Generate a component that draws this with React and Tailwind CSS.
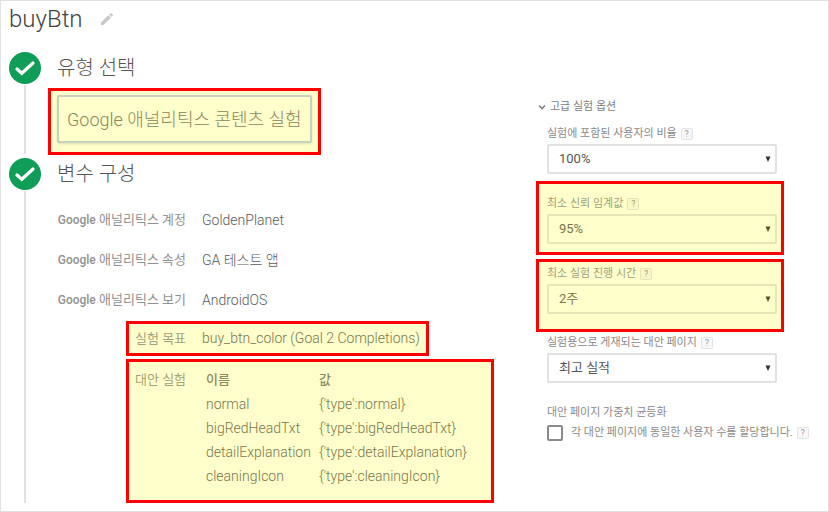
const variations = [
  { name: "normal", value: "{'type':normal}" },
  { name: "bigRedHeadTxt", value: "{'type':bigRedHeadTxt}" },
  { name: "detailExplanation", value: "{'type':detailExplanation}" },
  { name: "cleaningIcon", value: "{'type':cleaningIcon}" },
];

const account = [
  { label: "애널리틱스 계정", value: "GoldenPlanet" },
  { label: "애널리틱스 속성", value: "GA 테스트 앱" },
  { label: "애널리틱스 보기", value: "AndroidOS" },
];

function Step({ title, className, children }) {
  return (
    <li className="group flex gap-4">
      <div className="flex w-8 shrink-0 flex-col items-center">
        <svg viewBox="0 0 32 32" className="h-8 w-8">
          <circle cx="16" cy="16" r="16" fill="#0f9d58" />
          <path d="M8 17l4.8 4.3L24 11" fill="none" stroke="#fff" strokeWidth="3.2" strokeLinecap="round" />
        </svg>
        <div className="mt-px mb-1 w-0.5 flex-1 bg-[#e2e2e2] group-last:mb-0" />
      </div>
      <div className={`min-w-0 flex-1 ${className}`}>
        <h2 className="text-[20px] leading-8 font-light text-[#555]">{title}</h2>
        {children}
      </div>
    </li>
  );
}

function Help() {
  return (
    <button type="button" aria-label="도움말" className="flex h-3 w-3 shrink-0 items-center justify-center rounded-xs border border-black/8 bg-black/3 text-[9px] leading-none text-black/40">
      ?
    </button>
  );
}

function Field({ id, label, value, highlight, className }) {
  return (
    <div className={`w-[248px] pr-1 pl-2 ${highlight ? "border-3 border-[#ff0000] bg-[#ffffcc]" : "border-x-3 border-transparent"} ${className}`}>
      <div className="mb-0.5 flex h-4 items-center gap-1">
        <label htmlFor={id} className={`text-[11px] ${highlight ? "text-[#9f9f7a]" : "text-[#8a8a8a]"}`}>{label}</label>
        <Help />
      </div>
      <div className="relative">
        <select
          id={id}
          defaultValue={value}
          className={`block h-[30px] w-full appearance-none rounded-xs border-2 bg-transparent px-2.5 text-[13px] ${highlight ? "border-[#e6e6b8] text-[#77774c]" : "border-[#e2e2e2] text-[#555]"}`}
        >
          <option>{value}</option>
        </select>
        <svg viewBox="0 0 6 6" className={`pointer-events-none absolute top-3 right-1.5 h-1.5 w-1.5 ${highlight ? "text-[#55552c]" : "text-[#333]"}`}>
          <path d="M0.5 0.5h5L3 6z" fill="currentColor" />
        </svg>
      </div>
    </div>
  );
}

export default function App() {
  return (
    <main className="flex min-h-screen border border-[#e2e2e2] bg-white pb-2 pl-2 font-['Roboto','Noto_Sans_CJK_KR',sans-serif]">
      <section className="min-w-0 flex-1">
        <header className="mb-[15px] flex h-9 items-center gap-4">
          <h1 className="text-[24px] font-light text-[#444]">buyBtn</h1>
          <button type="button" aria-label="이름 수정">
            <svg viewBox="0 0 24 24" className="h-4 w-4">
              <path fill="#c8c8c8" d="M3 17.25V21h3.75L17.8 9.94l-3.75-3.75L3 17.25zM20.7 7.04a1 1 0 0 0 0-1.41l-2.34-2.34a1 1 0 0 0-1.41 0l-1.83 1.83 3.75 3.75 1.83-1.83z" />
            </svg>
          </button>
        </header>

        <ol>
          <Step title="유형 선택" className="pb-[3px]">
            <div className="mt-1 -ml-[9px] w-fit border-3 border-[#ff0000] bg-[#ffffcc] px-1.5 pt-1 pb-[9px]">
              <button type="button" className="h-12 rounded-xs border-2 border-[#c4d2be] px-2 text-[18px] font-light whitespace-nowrap text-[#88885c] shadow-sm">
                Google 애널리틱스 콘텐츠 실험
              </button>
            </div>
          </Step>

          <Step title="변수 구성">
            <dl className="mt-2.5 text-[14px] font-light text-[#5a5a5a]">
              {account.map((row) => (
                <div key={row.label} className="flex h-10 items-center gap-4">
                  <dt className="w-[129px] text-right text-[13px] font-normal whitespace-nowrap text-[#929292]">
                    <span className="text-[12px] font-medium">Google</span> {row.label}
                  </dt>
                  <dd>{row.value}</dd>
                </div>
              ))}
              <div className="mt-px ml-[69px] flex h-[35px] w-fit items-center gap-4 border-3 border-[#ff0000] bg-[#ffffcc] px-1.5 whitespace-nowrap text-[#77774c]">
                <dt className="w-[51px] text-[13px] font-normal text-[#a3a37a]">실험 목표</dt>
                <dd>buy_btn_color (Goal 2 Completions)</dd>
              </div>
              <div className="mt-[3px] ml-[69px] flex w-[368px] gap-5 border-3 border-[#ff0000] bg-[#ffffcc] px-1.5 pt-1.5 pb-3 whitespace-nowrap text-[#77774c]">
                <dt className="w-[51px] text-[13px] leading-6 font-normal text-[#a3a37a]">대안 실험</dt>
                <dd>
                  <table className="text-left leading-6">
                    <thead>
                      <tr className="h-6 text-[13px] text-[#8c8c60]">
                        <th className="w-[113px] p-0 font-medium">이름</th>
                        <th className="p-0 font-medium">값</th>
                      </tr>
                    </thead>
                    <tbody>
                      {variations.map((v) => (
                        <tr key={v.name} className="h-6">
                          <td className="p-0">{v.name}</td>
                          <td className="p-0">{v.value}</td>
                        </tr>
                      ))}
                    </tbody>
                  </table>
                </dd>
              </div>
            </dl>
          </Step>
        </ol>
      </section>

      <section className="w-[292px] shrink-0 pt-[98px]">
        <button type="button" className="mb-[11px] flex h-4 items-center gap-1 pl-0.5 text-[11px] text-[#808080]">
          <svg viewBox="0 0 8 8" className="h-2 w-2">
            <path d="M1 2.5l3 3 3-3" fill="none" stroke="currentColor" strokeWidth="1.6" />
          </svg>
          고급 실험 옵션
        </button>
        <Field id="ratio" label="실험에 포함된 사용자의 비율" value="100%" className="mb-[7px]" />
        <Field id="confidence" label="최소 신뢰 임계값" value="95%" highlight className="mb-1 pt-3 pb-2" />
        <Field id="duration" label="최소 실험 진행 시간" value="2주" highlight className="mb-[3px] pt-1 pb-[15px]" />
        <Field id="served" label="실험용으로 게재되는 대안 페이지" value="최고 실적" className="mb-[22px]" />

        <fieldset className="pl-[11px] text-[11px] text-[#8a8a8a]">
          <legend className="leading-4">대안 페이지 가중치 균등화</legend>
          <div className="mt-1 flex items-center gap-1">
            <input id="equal" type="checkbox" className="h-4 w-4 shrink-0 appearance-none rounded-xs border-2 border-[#8a8a8a]" />
            <label htmlFor="equal" className="pl-1 leading-4 whitespace-nowrap">각 대안 페이지에 동일한 사용자 수를 할당합니다.</label>
            <Help />
          </div>
        </fieldset>
      </section>
    </main>
  );
}
